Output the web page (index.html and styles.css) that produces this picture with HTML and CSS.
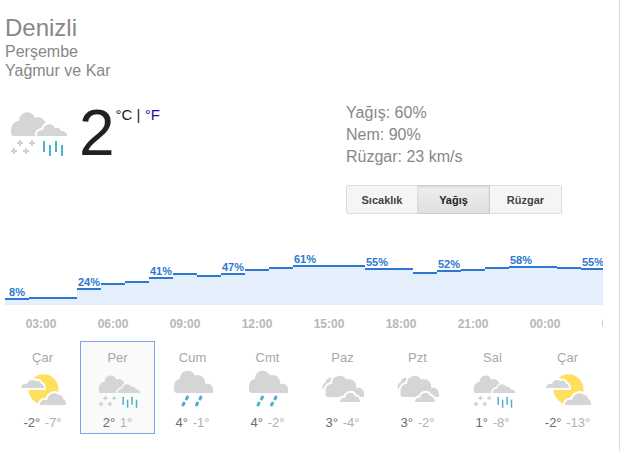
FILE: index.html
```html
<!DOCTYPE html>
<html lang="tr">
<head>
    <meta charset="UTF-8">
    <meta name="viewport" content="width=device-width, initial-scale=1.0">
    <title>Denizli hava durumu</title>
    <link rel="stylesheet" href="styles.css">
</head>
<body>
    <!-- shared icons -->
    <svg class="sprite" aria-hidden="true">
        <symbol id="sleet" viewBox="-3 -1 64 54">
            <path class="cloud" d="M4 30C1 22 5 15 11 15A8.2 8.2 0 0 1 27 12A7 7 0 0 1 37 20V30z"/>
            <path class="cloud front" d="M29 30C28 26 31 24 35 24A6.3 6.3 0 0 1 47 22A5 5 0 0 1 53 25C57 25 59 27 59 30z"/>
            <path class="snow" d="M12 34v6M9 37h6M24 34v6M21 37h6M6 42v6M3 45h6M18 42v6M15 45h6"/>
            <path class="rain" d="M36 35v11M42 39v11M48 35v11M54 39v11"/>
        </symbol>
        <symbol id="partly" viewBox="0 0 48 40">
            <circle class="sun" cx="24.5" cy="19.3" r="15"/>
            <path class="cloud front" d="M2 18C2 15 5 13 8 14C9 10 14 9 17 11C20 10 22 12 22 14C24 14 25 16 25 18z"/>
            <path class="cloud front" d="M21 35C21 31 24 29 28 30C29 24 36 21 40 25C43 25 44 27 44 29C46 29 47 32 47 35z"/>
        </symbol>
        <symbol id="showers" viewBox="0 0 48 40">
            <path class="cloud" d="M8 23C5 23 5 20 5 17C5 12 8 9 11 9A7.8 7.8 0 0 1 26 5.5A7.5 7.5 0 0 1 36 14C41 13 44 16 44 19V23z"/>
            <path class="drop" d="M18.5 27l-1 2M15 33l-1 2M32 27l-1 2M28.5 33l-1 2"/>
        </symbol>
        <symbol id="cloudy" viewBox="0 0 48 40">
            <path class="cloud" d="M4 19C3 15 5 13 7 12C7 9 10 7 13 8L14 19z"/>
            <path class="cloud front" d="M9 27C6 27 6.5 24 6.5 21C7 16 9 14 13 14A7.6 7.6 0 0 1 27 9.5A7.5 7.5 0 0 1 37 18C42 17 45 20 45 24V27z"/>
            <path class="cloud front" d="M21 32C21 29 23 27 26 28C27 22 34 21 36 26C39 26 41 29 41 32z"/>
        </symbol>
    </svg>

    <main class="weather">
        <header class="place">
            <h1>Denizli</h1>
            <p>Perşembe</p>
            <p>Yağmur ve Kar</p>
        </header>

        <section class="current">
            <div class="now">
                <svg class="now-icon" role="img" aria-label="Yağmur ve Kar"><use href="#sleet"/></svg>
                <span class="temp">2</span>
                <span class="units">°C | <a href="#">°F</a></span>
            </div>
            <div class="details">
                <p>Yağış: 60%</p>
                <p>Nem: 90%</p>
                <p>Rüzgar: 23 km/s</p>
                <div class="tabs">
                    <button type="button">Sıcaklık</button>
                    <button type="button" class="active">Yağış</button>
                    <button type="button">Rüzgar</button>
                </div>
            </div>
        </section>

        <section class="chart">
            <div class="bars">
                <div class="bar"><span>8%</span><i style="height: 7px"></i></div>
                <div class="bar"><i style="height: 8px"></i></div>
                <div class="bar"><i style="height: 8px"></i></div>
                <div class="bar"><span>24%</span><i style="height: 17px"></i></div>
                <div class="bar"><i style="height: 22px"></i></div>
                <div class="bar"><i style="height: 24px"></i></div>
                <div class="bar"><span>41%</span><i style="height: 28px"></i></div>
                <div class="bar"><i style="height: 32px"></i></div>
                <div class="bar"><i style="height: 30px"></i></div>
                <div class="bar"><span>47%</span><i style="height: 32px"></i></div>
                <div class="bar"><i style="height: 36px"></i></div>
                <div class="bar"><i style="height: 38px"></i></div>
                <div class="bar"><span>61%</span><i style="height: 40px"></i></div>
                <div class="bar"><i style="height: 40px"></i></div>
                <div class="bar"><i style="height: 40px"></i></div>
                <div class="bar"><span>55%</span><i style="height: 37px"></i></div>
                <div class="bar"><i style="height: 37px"></i></div>
                <div class="bar"><i style="height: 33px"></i></div>
                <div class="bar"><span>52%</span><i style="height: 35px"></i></div>
                <div class="bar"><i style="height: 36px"></i></div>
                <div class="bar"><i style="height: 38px"></i></div>
                <div class="bar"><span>58%</span><i style="height: 39px"></i></div>
                <div class="bar"><i style="height: 39px"></i></div>
                <div class="bar"><i style="height: 38px"></i></div>
                <div class="bar"><span>55%</span><i style="height: 37px"></i></div>
            </div>
            <div class="hours">
                <span>03:00</span>
                <span>06:00</span>
                <span>09:00</span>
                <span>12:00</span>
                <span>15:00</span>
                <span>18:00</span>
                <span>21:00</span>
                <span>00:00</span>
                <span>03:00</span>
            </div>
        </section>

        <section class="days">
            <div class="day">
                <h2>Çar</h2>
                <svg class="day-icon"><use href="#partly"/></svg>
                <p>-2° <span>-7°</span></p>
            </div>
            <div class="day selected">
                <h2>Per</h2>
                <svg class="day-icon"><use href="#sleet"/></svg>
                <p>2° <span>1°</span></p>
            </div>
            <div class="day">
                <h2>Cum</h2>
                <svg class="day-icon"><use href="#showers"/></svg>
                <p>4° <span>-1°</span></p>
            </div>
            <div class="day">
                <h2>Cmt</h2>
                <svg class="day-icon"><use href="#showers"/></svg>
                <p>4° <span>-2°</span></p>
            </div>
            <div class="day">
                <h2>Paz</h2>
                <svg class="day-icon"><use href="#cloudy"/></svg>
                <p>3° <span>-4°</span></p>
            </div>
            <div class="day">
                <h2>Pzt</h2>
                <svg class="day-icon"><use href="#cloudy"/></svg>
                <p>3° <span>-2°</span></p>
            </div>
            <div class="day">
                <h2>Sal</h2>
                <svg class="day-icon"><use href="#sleet"/></svg>
                <p>1° <span>-8°</span></p>
            </div>
            <div class="day">
                <h2>Çar</h2>
                <svg class="day-icon"><use href="#partly"/></svg>
                <p>-2° <span>-13°</span></p>
            </div>
        </section>
    </main>
</body>
</html>
```

FILE: styles.css
```css
* {
    margin: 0;
    padding: 0;
    box-sizing: border-box;
}

body {
    background: #fff;
    color: #878787;
    font-family: "Liberation Sans", Arial, sans-serif;
    font-size: 16px;
}

.sprite {
    display: none;
}

.cloud {
    fill: #d5d5d5;
}

/* gap round a cloud that overlaps something */
.front {
    stroke: var(--gap, #fff);
    stroke-width: 4;
    paint-order: stroke;
}

.sun {
    fill: #ffdf5e;
}

.snow {
    stroke: #d0d0d0;
    stroke-width: 2;
}

.rain {
    stroke: #4db2c9;
    stroke-width: 2;
}

.drop {
    stroke: #4db2c9;
    stroke-width: 3;
    stroke-linecap: round;
}

.weather {
    margin-right: 2px;
    padding: 14px 16px 18px 5px;
    border-right: 1px solid #dcdcdc;
    border-radius: 0 0 2px 0;
}

.place h1 {
    font-size: 24px;
    font-weight: normal;
    line-height: 28px;
}

.place p {
    line-height: 19px;
}

.current {
    display: grid;
    grid-template-columns: 341px 1fr;
    margin-top: 22px;
}

.now {
    display: flex;
    align-items: flex-start;
    padding-top: 3px;
}

.now-icon {
    width: 64px;
    height: 54px;
    margin-right: 10px;
}

.temp {
    color: #212121;
    font-size: 64px;
    line-height: 56px;
}

.units {
    margin-left: 1px;
    color: #212121;
    font-size: 15px;
    line-height: 20px;
}

.units a {
    color: #1a0dab;
    text-decoration: none;
}

.details p {
    line-height: 22px;
}

.tabs {
    display: flex;
    margin-top: 17px;
}

.tabs button {
    width: 72px;
    height: 29px;
    border: 1px solid #dcdcdc;
    background: #f5f5f5;
    color: #444;
    font-family: inherit;
    font-size: 11px;
    font-weight: bold;
}

.tabs button + button {
    border-left: none;
}

.tabs button:first-child {
    border-radius: 2px 0 0 2px;
}

.tabs button:last-child {
    border-radius: 0 2px 2px 0;
}

.tabs .active {
    border-color: #ccc;
    background: linear-gradient(#eee, #e0e0e0);
    box-shadow: inset 0 1px 2px rgba(0, 0, 0, 0.1);
    color: #222;
}

.chart {
    overflow: hidden;
    margin-top: 37px;
}

.bars {
    display: flex;
    align-items: flex-end;
    height: 54px;
}

.bar {
    flex: 0 0 24px;
    display: flex;
    flex-direction: column;
    text-align: center;
}

.bar span {
    color: #2c78d2;
    font-size: 11px;
    font-weight: bold;
    line-height: 12px;
}

.bar i {
    border-top: 2px solid #2c78d2;
    background: #e5effc;
}

.hours {
    display: flex;
    margin-top: 10px;
    color: #b8b8b8;
    font-size: 12px;
    font-weight: bold;
    line-height: 18px;
}

.hours span {
    flex: 0 0 72px;
    text-align: center;
}

.days {
    display: flex;
    margin-top: 8px;
}

.day {
    flex: 0 0 75px;
    padding: 8px 0 1px;
    border: 1px solid transparent;
    text-align: center;
}

.day.selected {
    --gap: #fafafa;
    border-color: #7ba4ec;
    background: #fafafa;
}

.day h2 {
    color: #a8a8a8;
    font-size: 13px;
    font-weight: normal;
    line-height: 16px;
}

.day-icon {
    display: block;
    width: 48px;
    height: 40px;
    margin: 4px auto;
}

.day p {
    color: #6c6c6c;
    font-size: 13px;
    line-height: 18px;
}

.day p span {
    margin-left: 1px;
    color: #b0b0b0;
}
```
